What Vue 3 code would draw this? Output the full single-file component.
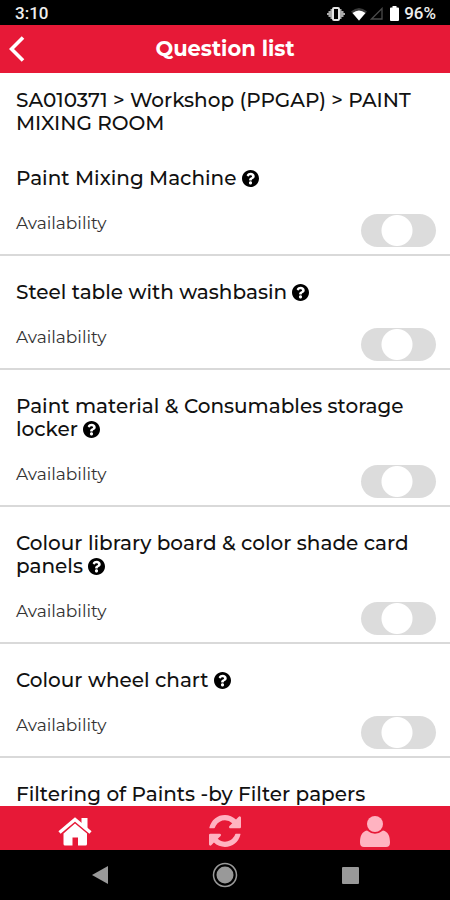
<script setup>
import { ref } from 'vue'

const questions = ref([
  { title: 'Paint Mixing Machine', help: true, toggle: true },
  { title: 'Steel table with washbasin', help: true, toggle: true },
  { title: 'Paint material & Consumables storage locker', help: true, toggle: true },
  { title: 'Colour library board & color shade card panels', help: true, toggle: true },
  { title: 'Colour wheel chart', help: true, toggle: true },
  { title: 'Filtering of Paints -by Filter papers', help: false, toggle: false },
])
</script>

<template>
  <div class="app">
    <div class="status">
      <span class="clock">3:10</span>
      <div class="indicators">
        <svg width="18" height="16" viewBox="0 0 18 16">
          <path d="M4.500 3v10M2.500 5v6M.5 7v2M13.500 3v10M15.500 5v6M17.500 7v2" stroke="#aaa" stroke-width="2" />
          <rect x="6" y="2" width="6" height="12" rx="1" fill="#000" stroke="#e4e4e4" stroke-width="2" />
        </svg>
        <svg class="wifi" width="16" height="14" viewBox="0 0 16 14">
          <path d="M0 4.500Q8-2.500 16 4.500L8 14z" fill="#3a3a3a" />
          <path d="M1.500 6Q8 1 14.500 6L8 13.500z" fill="#fff" />
        </svg>
        <svg width="13" height="13" viewBox="0 0 13 13">
          <path d="M12 1.500V12H1.500z" fill="none" stroke="#4a4a4a" stroke-width="1.300" />
        </svg>
        <svg class="battery" width="9" height="15" viewBox="0 0 9 15">
          <path d="M2.500 0h4v1.500H8a1 1 0 0 1 1 1V14a1 1 0 0 1-1 1H1a1 1 0 0 1-1-1V2.500a1 1 0 0 1 1-1h1.500z" fill="#fff" />
        </svg>
        <span class="percent">96%</span>
      </div>
    </div>

    <header class="header">
      <button class="back" type="button" aria-label="Back">
        <svg width="16" height="28" viewBox="0 0 16 28">
          <path d="M14 2.500L2.500 14L14 25.500" fill="none" stroke="#fff" stroke-width="3.600" />
        </svg>
      </button>
      <h1>Question list</h1>
    </header>

    <main class="content">
      <p class="crumbs">SA010371 &gt; Workshop (PPGAP) &gt; PAINT MIXING ROOM</p>
      <section v-for="(q, i) in questions" :key="i" class="item">
        <h2>
          {{ q.title }}
          <svg v-if="q.help" class="help" width="17" height="17" viewBox="8 8 496 496">
            <path d="M504 256c0 136.997-111.043 248-248 248S8 392.997 8 256C8 119.083 119.043 8 256 8s248 111.083 248 248zM262.655 90c-54.497 0-89.255 22.957-116.549 63.758-3.536 5.286-2.353 12.415 2.715 16.258l34.699 26.31c5.205 3.947 12.621 3.008 16.665-2.122 17.864-22.658 30.113-35.797 57.303-35.797 20.429 0 45.698 13.148 45.698 32.958 0 14.976-12.363 22.667-32.534 33.976C247.128 238.528 216 254.941 216 296v4c0 6.627 5.373 12 12 12h56c6.627 0 12-5.373 12-12v-1.333c0-28.462 83.186-29.647 83.186-106.667 0-58.002-60.165-102-116.531-102zM256 338c-25.365 0-46 20.635-46 46 0 25.364 20.635 46 46 46s46-20.636 46-46c0-25.365-20.635-46-46-46z" />
          </svg>
        </h2>
        <div v-if="q.toggle" class="row">
          <label :for="'q' + i">Availability</label>
          <input :id="'q' + i" class="switch" type="checkbox" :indeterminate="true" />
        </div>
      </section>
    </main>

    <nav class="tabs">
      <button type="button" aria-label="Home">
        <svg width="34" height="29" viewBox="0 0 34 29">
          <path d="M1.500 15.500L17 2.500L32.500 15.500" fill="none" stroke="#fff" stroke-width="3.400" />
          <path d="M23.500 1h6v11l-6-5z" fill="#fff" />
          <path d="M17 6.500L29 16.500v10.500a1.500 1.500 0 0 1-1.500 1.500H20v-8h-5.500v8H7a1.500 1.500 0 0 1-1.500-1.500V16.500z" fill="#fff" />
        </svg>
      </button>
      <button type="button" aria-label="Sync">
        <svg width="32" height="32" viewBox="0 0 1536 1536">
          <path d="M1511 928q0 5-1 7-64 268-268 434.500t-478 166.500q-146 0-282.500-55t-243.500-157l-129 129q-19 19-45 19t-45-19-19-45v-448q0-26 19-45t45-19h448q26 0 45 19t19 45-19 45l-137 137q71 66 161 102t187 36q134 0 250-65t186-179q11-17 53-117 8-23 30-23h192q13 0 22.500 9.500t9.500 22.500zm25-800v448q0 26-19 45t-45 19h-448q-26 0-45-19t-19-45 19-45l138-138q-148-137-349-137-134 0-250 65t-186 179q-11 17-53 117-8 23-30 23h-199q-13 0-22.500-9.500t-9.500-22.500v-7q65-268 270-434.500t480-166.500q146 0 284 55.500t245 156.500l130-129q19-19 45-19t45 19 19 45z" fill="#ffb3c1" />
        </svg>
      </button>
      <button type="button" aria-label="Profile">
        <svg width="30" height="31" viewBox="0 0 30 31">
          <path d="M7 14.500Q15 21 23 14.500C28 15.500 30 20 30 26.500Q30 31 26 31H4Q0 31 0 26.500C0 20 2 15.500 7 14.500z" fill="#ffb3c1" />
          <circle cx="15" cy="8" r="8" fill="#ffb3c1" />
        </svg>
      </button>
    </nav>

    <div class="system">
      <button type="button" aria-label="System back">
        <svg width="17" height="18" viewBox="0 0 17 18"><path d="M16 0v18L0 9z" fill="#999" /></svg>
      </button>
      <button type="button" aria-label="System home">
        <svg width="26" height="26" viewBox="0 0 26 26">
          <circle cx="13" cy="13" r="11.500" fill="none" stroke="#999" stroke-width="1.500" />
          <circle cx="13" cy="13" r="8.500" fill="#999" />
        </svg>
      </button>
      <button type="button" aria-label="Recent apps">
        <svg width="17" height="17" viewBox="0 0 17 17"><rect width="17" height="17" rx="1" fill="#999" /></svg>
      </button>
    </div>
  </div>
</template>

<style>
body {
  margin: 0;
}
</style>

<style scoped>
.app {
  display: flex;
  flex-direction: column;
  height: 100vh;
  background: #fff;
  color: #111;
  font-family: Montserrat, Inter, sans-serif;
}
button {
  display: flex;
  align-items: center;
  justify-content: center;
  padding: 0;
  border: 0;
  background: none;
}
.status {
  display: flex;
  flex: none;
  align-items: center;
  justify-content: space-between;
  height: 25px;
  padding: 2px 14px 0 15px;
  box-sizing: border-box;
  background: #000;
  color: #eee;
  font: 500 17px/23px Roboto, sans-serif;
}
.indicators {
  display: flex;
  align-items: center;
}
.wifi {
  margin: 0 3px 0 6px;
}
.battery {
  margin: 0 5px 0 7px;
}
.header {
  display: grid;
  flex: none;
  grid-template-columns: 34px 1fr 34px;
  align-items: center;
  height: 48px;
  background: #e71937;
  color: #fff;
}
.back {
  height: 48px;
}
h1 {
  margin: 0;
  font-size: 21px;
  font-weight: 700;
  line-height: 24px;
  text-align: center;
}
.content {
  flex: 1;
  min-height: 0;
  overflow-y: auto;
  scrollbar-width: none;
}
.crumbs {
  margin: 0;
  padding: 16px 16px 7px;
  font-size: 20px;
  font-weight: 500;
  line-height: 23px;
}
.item {
  padding: 25px 14px 7px 16px;
  border-bottom: 2px solid #d9d9d9;
}
h2 {
  margin: 0;
  font-size: 20px;
  font-weight: 500;
  line-height: 23px;
}
.help {
  vertical-align: -2px;
}
.row {
  display: flex;
  justify-content: space-between;
  padding-top: 24px;
}
label {
  color: #333;
  font-size: 17px;
  line-height: 18px;
}
.switch {
  width: 75px;
  height: 33px;
  margin: 0;
  border-radius: 17px;
  appearance: none;
  background: radial-gradient(circle at 36px 50%, #fff 15px, #dcdcdc 16px);
}
.tabs,
.system {
  display: grid;
  flex: none;
  grid-template-columns: repeat(3, 1fr);
}
.tabs {
  height: 44px;
  padding-top: 6px;
  box-sizing: border-box;
  background: #e71937;
}
.system {
  grid-template-columns: repeat(3, 125px);
  justify-content: center;
  height: 50px;
  background: #000;
}
</style>
